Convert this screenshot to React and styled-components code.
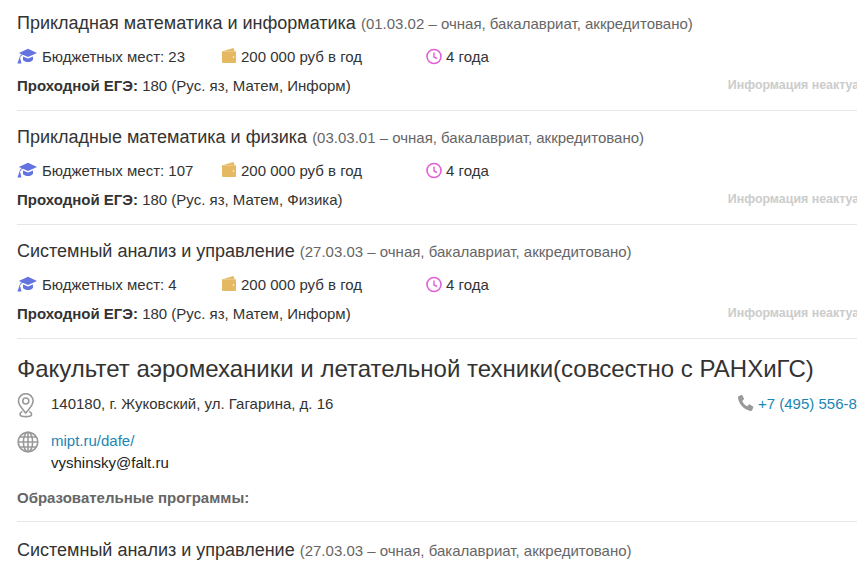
import React from "react";
import styled, { createGlobalStyle } from "styled-components";

const Global = createGlobalStyle`
  html, body { margin: 0; padding: 0; background: #fff; overflow: hidden; }
  body { font-family: "Liberation Sans", Arial, sans-serif; color: #333; }
`;
const Page = styled.div`
  width: 857px;
  height: 571px;
  overflow: hidden;
`;
const Content = styled.div`
  width: 872px;
  margin-left: 17px;
  padding-top: 12px;
`;
const Program = styled.section`
  height: 98px;
  margin-bottom: 15px;
  border-bottom: 1px solid #e7e7e7;
`;
const Title = styled.h3`
  margin: 0;
  font-size: 18px;
  line-height: 22px;
  font-weight: 400;
  color: #333;
  white-space: nowrap;
`;
const Code = styled.span`
  font-size: 15px;
  color: #666;
`;
const Facts = styled.div`
  display: flex;
  align-items: center;
  height: 22px;
  margin-top: 10px;
  font-size: 15px;
  color: #333;
`;
const Fact = styled.div`
  display: flex;
  align-items: center;
  width: ${(p) => p.$w}px;
  white-space: nowrap;
`;
const FactIcon = styled.svg`
  width: ${(p) => p.$w}px;
  height: 20px;
  margin-right: ${(p) => p.$gap}px;
  flex: none;
`;
const ExamRow = styled.div`
  display: flex;
  justify-content: space-between;
  align-items: center;
  height: 20px;
  margin-top: 8px;
  font-size: 15px;
  white-space: nowrap;
`;
const Stale = styled.span`
  font-size: 12.4px;
  font-weight: 700;
  color: #ccc;
`;
const Faculty = styled.h2`
  margin: 0;
  font-size: 24px;
  line-height: 30px;
  font-weight: 400;
  color: #333;
  white-space: nowrap;
`;
const InfoRow = styled.div`
  display: flex;
  justify-content: space-between;
  align-items: flex-start;
  margin-top: ${(p) => p.$top}px;
  font-size: 15px;
  line-height: 22px;
`;
const InfoMain = styled.div`
  display: flex;
  align-items: flex-start;
`;
const InfoIcon = styled.svg`
  width: 22px;
  height: 26px;
  margin-right: 12px;
  flex: none;
`;
const Link = styled.a`
  display: block;
  color: #1a87b3;
  text-decoration: none;
`;
const Mail = styled.div`
  color: #222;
`;
const Phone = styled.div`
  display: flex;
  align-items: center;
  width: 152px;
  color: #1a87b3;
  white-space: nowrap;
`;
const PhoneIcon = styled.svg`
  width: 18px;
  height: 18px;
  margin: -2px 3px 0 0;
  flex: none;
`;
const ProgramsLabel = styled.div`
  margin-top: 16px;
  padding-bottom: 15px;
  border-bottom: 1px solid #e7e7e7;
  font-size: 15px;
  line-height: 16px;
  font-weight: 700;
  color: #666;
`;
const LastTitle = styled(Title)`
  margin-top: 17px;
`;

const Cap = () => (
  <FactIcon viewBox="0 0 20 20" $w={20} $gap={5}>
    <path fill="#6373e0" d="M11 2.800 20 7l-9 4-5.200-2.200C4 9.600 3.200 11 3 12.600c.5.300.7.700.6 1.200L4.400 17.500H.4L1.800 13.800c-.1-.5.100-.9.500-1.200.2-1.900 1-3.500 2.400-4.400L1.800 7z" />
    <path fill="#6373e0" d="M6 10.500l5 2.100 5-2.100v3.200c-1 1.400-2.900 2.300-5 2.300s-3.600-.8-5-2.100z" />
  </FactIcon>
);
const Wallet = () => (
  <FactIcon viewBox="0 0 14 20" $w={14} $gap={5}>
    <path fill="#e5b862" d="M0 5.500 10.500 2.300c.9-.3 1.700.2 1.700 1V5H2z" />
    <path fill="#e5b862" d="M0 5.200h13c.6 0 1 .4 1 1v9.800c0 .6-.4 1-1 1H1.200C.5 17 0 16.500 0 15.800z" />
    <circle cx="11.500" cy="11" r=".8" fill="#fff" />
  </FactIcon>
);
const Clock = () => (
  <FactIcon viewBox="0 0 16 20" $w={16} $gap={4}>
    <circle cx="8" cy="10.500" r="7" fill="none" stroke="#e35fd6" strokeWidth="1.600" />
    <path d="M8 6.500V11l3 1.500" fill="none" stroke="#e35fd6" strokeWidth="1.400" />
  </FactIcon>
);
const Pin = () => (
  <InfoIcon viewBox="0 0 22 26">
    <g fill="none" stroke="#999" strokeWidth="1.600">
      <path d="M8.500 20C5.500 15.500 1.500 12.500 1.500 8a7.300 7.300 0 0 1 14.600 0C16.100 12.500 12 15.500 8.800 20z" />
      <circle cx="8.800" cy="8" r="3" />
      <path d="M5.500 18.500c-1.600.6-2.500 1.500-2.500 2.700 0 1.500 2.500 2.400 5.800 2.400s5.800-.9 5.800-2.400c0-1.200-.9-2.100-2.500-2.700" />
    </g>
  </InfoIcon>
);
const Globe = () => (
  <InfoIcon viewBox="0 0 22 26">
    <g fill="none" stroke="#999" strokeWidth="1.600">
      <circle cx="11" cy="12" r="9.800" />
      <ellipse cx="11" cy="12" rx="4.600" ry="9.800" />
      <path d="M11 2.200v19.600M1.200 12h19.600M2.800 7h16.400M2.800 17h16.400" />
    </g>
  </InfoIcon>
);

const programs = [
  ["Прикладная математика и информатика", "(01.03.02 – очная, бакалавриат, аккредитовано)", "23", "Матем, Информ"],
  ["Прикладные математика и физика", "(03.03.01 – очная, бакалавриат, аккредитовано)", "107", "Матем, Физика"],
  ["Системный анализ и управление", "(27.03.03 – очная, бакалавриат, аккредитовано)", "4", "Матем, Информ"],
];

export default function App() {
  return (
    <Page>
      <Global />
      <Content>
        {programs.map(([name, code, seats, subjects]) => (
          <Program key={code}>
            <Title>{name} <Code>{code}</Code></Title>
            <Facts>
              <Fact $w={205}><Cap />Бюджетных мест: {seats}</Fact>
              <Fact $w={204}><Wallet />200 000 руб в год</Fact>
              <Fact $w={100}><Clock />4 года</Fact>
            </Facts>
            <ExamRow>
              <span><b>Проходной ЕГЭ:</b> 180 (Рус. яз, {subjects})</span>
              <Stale>Информация неактуальна</Stale>
            </ExamRow>
          </Program>
        ))}
        <Faculty>Факультет аэромеханики и летательной техники(совсестно с РАНХиГС)</Faculty>
        <InfoRow $top={9}>
          <InfoMain><Pin />140180, г. Жуковский, ул. Гагарина, д. 16</InfoMain>
          <Phone>
            <PhoneIcon viewBox="0 0 18 18">
              <path fill="#999" d="M4.300 1 1.500 2.200C1 2.400.9 3 1 3.700c.8 6.300 6 12.100 12.600 13.200.8.100 1.300-.1 1.500-.6l1.200-2.900c.2-.4 0-.8-.3-1l-3.200-2c-.4-.2-.8-.1-1 .2l-1.300 1.600C8 11.200 6.200 9.300 5.200 6.900l1.500-1.300c.3-.3.4-.7.200-1.100L5.300 1.300C5.100 1 4.700.8 4.300 1z" />
            </PhoneIcon>
            +7 (495) 556-8
          </Phone>
        </InfoRow>
        <InfoRow $top={11}>
          <InfoMain>
            <Globe />
            <div>
              <Link href="#">mipt.ru/dafe/</Link>
              <Mail>vyshinsky@falt.ru</Mail>
            </div>
          </InfoMain>
        </InfoRow>
        <ProgramsLabel>Образовательные программы:</ProgramsLabel>
        <LastTitle>Системный анализ и управление <Code>(27.03.03 – очная, бакалавриат, аккредитовано)</Code></LastTitle>
      </Content>
    </Page>
  );
}
